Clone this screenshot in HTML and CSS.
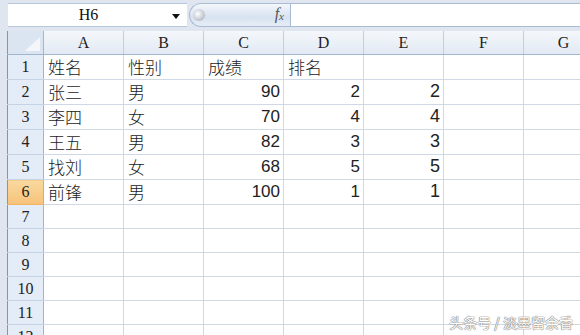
FILE: index.html
```html
<!DOCTYPE html>
<html lang="zh">
<head>
    <meta charset="UTF-8">
    <title>Sheet1</title>
    <link rel="stylesheet" href="styles.css">
</head>
<body>
<div class="window">
    <div class="formula-bar">
        <div class="name-box">
            <span class="cell-ref">H6</span>
            <span class="drop-arrow"></span>
        </div>
        <div class="fx-pill">
            <span class="pill-knob"></span>
            <span class="fx">f<sub>x</sub></span>
        </div>
        <div class="formula-input"></div>
    </div>

    <table class="sheet">
        <colgroup>
            <col class="col-head">
            <col class="col"><col class="col"><col class="col"><col class="col">
            <col class="col"><col class="col"><col class="col">
        </colgroup>
        <thead>
        <tr>
            <th class="corner"><span class="corner-mark"></span></th>
            <th>A</th><th>B</th><th>C</th><th>D</th><th>E</th><th>F</th><th>G</th>
        </tr>
        </thead>
        <tbody>
        <tr class="tall">
            <th>1</th><td>姓名</td><td>性别</td><td>成绩</td><td>排名</td><td></td><td></td><td></td>
        </tr>
        <tr class="tall">
            <th>2</th><td>张三</td><td>男</td><td class="num">90</td><td class="num">2</td><td class="num big">2</td><td></td><td></td>
        </tr>
        <tr class="tall">
            <th>3</th><td>李四</td><td>女</td><td class="num">70</td><td class="num">4</td><td class="num big">4</td><td></td><td></td>
        </tr>
        <tr class="tall">
            <th>4</th><td>王五</td><td>男</td><td class="num">82</td><td class="num">3</td><td class="num big">3</td><td></td><td></td>
        </tr>
        <tr class="tall">
            <th>5</th><td>找刘</td><td>女</td><td class="num">68</td><td class="num">5</td><td class="num big">5</td><td></td><td></td>
        </tr>
        <tr class="tall">
            <th class="active">6</th><td>前锋</td><td>男</td><td class="num">100</td><td class="num">1</td><td class="num big">1</td><td></td><td></td>
        </tr>
        <tr><th>7</th><td></td><td></td><td></td><td></td><td></td><td></td><td></td></tr>
        <tr><th>8</th><td></td><td></td><td></td><td></td><td></td><td></td><td></td></tr>
        <tr><th>9</th><td></td><td></td><td></td><td></td><td></td><td></td><td></td></tr>
        <tr><th>10</th><td></td><td></td><td></td><td></td><td></td><td></td><td></td></tr>
        <tr><th>11</th><td></td><td></td><td></td><td></td><td></td><td></td><td></td></tr>
        <tr><th>12</th><td></td><td></td><td></td><td></td><td></td><td></td><td></td></tr>
        </tbody>
    </table>

    <div class="watermark">头条号 / 淡墨留余香</div>
</div>
</body>
</html>
```

FILE: styles.css
```css
body {
    margin: 0;
    background: #dfe6ef;
    font-family: "Liberation Serif", "Noto Sans CJK SC", serif;
}

.window {
    position: relative;
    width: 580px;
    height: 335px;
    overflow: hidden;
    background: #dfe6ef;
    padding-left: 7px;
    box-sizing: border-box;
}

/* formula bar */
.formula-bar {
    display: flex;
    height: 24px;
    margin-top: 3px;
    margin-bottom: 4px;
    padding-left: 1px;
}

.name-box {
    position: relative;
    width: 179px;
    background: #fff;
    border-top: 1px solid #b8c8dc;
    border-bottom: 1px solid #b8c8dc;
    box-sizing: border-box;
    text-align: center;
    padding-right: 18px;
    font-size: 16px;
    line-height: 22px;
    color: #111;
}

.drop-arrow {
    position: absolute;
    right: 7px;
    top: 10px;
    border-left: 4px solid transparent;
    border-right: 4px solid transparent;
    border-top: 5px solid #111;
}

.fx-pill {
    position: relative;
    width: 101px;
    margin-left: 2px;
    background: linear-gradient(#f4f7fb, #d7e2f0 60%, #e6edf6);
    border: 1px solid #a9bcd4;
    border-right: none;
    border-radius: 12px 0 0 12px;
    box-sizing: border-box;
}

.pill-knob {
    position: absolute;
    left: 3px;
    top: 5px;
    width: 12px;
    height: 12px;
    border-radius: 50%;
    background: radial-gradient(circle at 40% 40%, #ffffff, #b9c0c8 70%);
}

.fx {
    position: absolute;
    right: 6px;
    top: 1px;
    font-style: italic;
    font-size: 16px;
    color: #555;
}

.fx sub {
    font-size: 11px;
    vertical-align: -1px;
}

.formula-input {
    flex: 1;
    background: #fff;
    border: 1px solid #a9bcd4;
    border-right: none;
}

/* grid */
.sheet {
    width: 597px;
    border-collapse: collapse;
    table-layout: fixed;
    border-left: 1px solid #6f9ad0;
}

.col-head {
    width: 36px;
}

.col {
    width: 80px;
}

.sheet th,
.sheet td {
    padding: 0;
    overflow: hidden;
    white-space: nowrap;
    line-height: 20px;
}

.sheet thead th {
    height: 23px;
    background: linear-gradient(#f4f7fb, #e2e9f3);
    border-right: 1px solid #c3cfdf;
    border-bottom: 1px solid #9eb6ce;
    font-weight: normal;
    font-size: 16px;
    color: #222;
}

.sheet thead th.corner {
    position: relative;
    background: #dbe5f1;
    border-right: 1px solid #9eb6ce;
}

.corner-mark {
    position: absolute;
    right: 3px;
    bottom: 3px;
    border-left: 15px solid transparent;
    border-bottom: 14px solid #f4f6f9;
}

.sheet tbody th {
    height: 23px;
    background: #e4ecf7;
    border-right: 1px solid #9eb6ce;
    border-bottom: 1px solid #c5d3e5;
    font-weight: normal;
    font-size: 16px;
    color: #222;
}

.sheet tbody tr.tall th {
    height: 24px;
}

.sheet tbody th.active {
    background: linear-gradient(#f9d99f, #f6c27a);
    border-bottom-color: #f2b462;
}

.sheet td {
    background: #fff;
    border-right: 1px solid #d0d7e5;
    border-bottom: 1px solid #d0d7e5;
    padding-left: 4px;
    font-family: "Noto Sans CJK SC", sans-serif;
    font-weight: 300;
    font-size: 17px;
    color: #1a1a1a;
}

.sheet td.num {
    text-align: right;
    padding-right: 3px;
    font-family: "Liberation Sans", sans-serif;
    font-weight: normal;
    font-size: 17px;
    color: #222;
}

.sheet td.big {
    font-size: 18px;
    vertical-align: top;
    padding-top: 1px;
}

.watermark {
    position: absolute;
    right: 7px;
    bottom: 3px;
    font-family: "Noto Sans CJK SC", sans-serif;
    font-size: 14px;
    color: #fff;
    text-shadow: 0 0 1px #777, 0 0 1px #777, 0 0 1px #777;
}
```
